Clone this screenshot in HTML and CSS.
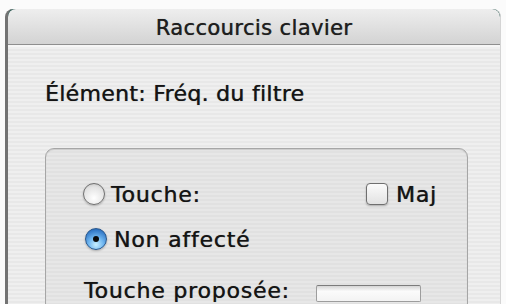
FILE: index.html
```html
<!DOCTYPE html>
<html lang="fr">
<head>
<meta charset="utf-8">
<link rel="stylesheet" href="styles.css">
</head>
<body>
<div class="window">
  <div class="titlebar">Raccourcis clavier</div>
  <div class="content">
    <div class="element">Élément: Fréq. du filtre</div>
    <div class="group">
      <div class="row row1">
        <label class="opt"><span class="radio"></span>Touche:</label>
        <label class="opt maj"><span class="check"></span>Maj</label>
      </div>
      <div class="row row2">
        <label class="opt"><span class="radio on"><span class="dot"></span></span>Non affecté</label>
      </div>
      <div class="row row3">
        <span class="lbl">Touche proposée:</span>
        <span class="field"></span>
      </div>
    </div>
  </div>
</div>
</body>
</html>
```

FILE: styles.css
```css
html, body {
  margin: 0;
  padding: 0;
  background: #fbfbfb;
  overflow: hidden;
}
body {
  width: 506px;
  height: 304px;
  font-family: "DejaVu Sans", "Open Sans", sans-serif;
  color: #141414;
  text-shadow: 0.4px 0 0 rgba(0,0,0,0.55), 0 0 1px rgba(0,0,0,0.35);
}
.window {
  margin: 9px 0 0 5px;
  width: 496px;
  height: 295px;
  border-left: 3px solid #737373;
  border-right: 1px solid #d4d4d4;
  border-radius: 8px 8px 0 0;
  background: #2a5a52;
  overflow: hidden;
  box-sizing: border-box;
}
.titlebar {
  height: 36px;
  background: linear-gradient(#eeeeee, #d3d3d3);
  border-bottom: 1px solid #8e8e8e;
  border-radius: 8px 8px 0 0;
  text-align: center;
  font-size: 21px;
  letter-spacing: 0.4px;
  line-height: 38px;
  color: #1e1e1e;
  box-sizing: border-box;
}
.content {
  height: 260px;
  border-top: 2px solid #f6f6f6;
  background: repeating-linear-gradient(#efefef 0 2px, #e8e8e8 2px 4px);
  padding: 34px 0 0 37px;
  box-sizing: border-box;
}
.element {
  font-size: 22px;
  letter-spacing: 0.3px;
  line-height: 26px;
}
.group {
  margin-top: 41px;
  width: 423px;
  height: 200px;
  border: 1px solid #a6a6a6;
  border-radius: 9px;
  background: repeating-linear-gradient(#e7e7e7 0 2px, #e1e1e1 2px 4px);
  box-shadow: inset 0 1px 1px rgba(0,0,0,0.12);
  padding: 33px 0 0 37px;
  box-sizing: border-box;
}
.row {
  display: flex;
  align-items: center;
  font-size: 22px;
  letter-spacing: 0.8px;
  height: 24px;
}
.row1 {
  justify-content: space-between;
  width: 354px;
}
.row2 {
  margin-top: 21px;
}
.row3 {
  margin-top: 27px;
  padding-left: 1px;
}
.opt {
  display: flex;
  align-items: center;
}
.radio {
  width: 22px;
  height: 22px;
  border-radius: 50%;
  border: 1px solid #6f6f6f;
  background: radial-gradient(circle at 50% 70%, #ffffff, #e2e2e2 65%, #b8b8b8);
  margin-right: 6px;
  display: flex;
  align-items: center;
  justify-content: center;
  box-shadow: 0 1px 2px rgba(0,0,0,0.25);
  box-sizing: border-box;
}
.radio.on {
  border-color: #28578c;
  background: radial-gradient(circle at 50% 78%, #c8efff, #6fb6f0 40%, #2e74c4 80%, #1f5aa0);
  margin-left: 2px;
  margin-right: 7px;
}
.dot {
  width: 6px;
  height: 6px;
  border-radius: 50%;
  background: #0b0b0b;
}
.check {
  width: 22px;
  height: 22px;
  border: 1px solid #6f6f6f;
  border-radius: 4px;
  background: linear-gradient(#fbfbfb, #e2e2e2);
  margin-right: 8px;
  box-shadow: 0 1px 2px rgba(0,0,0,0.25);
  box-sizing: border-box;
}
.lbl {
  margin-right: 26px;
}
.field {
  width: 105px;
  height: 17px;
  border: 1px solid #9d9d9d;
  border-top-color: #7c7c7c;
  border-radius: 2px;
  background: linear-gradient(#d6d6d6, #fbfbfb 35%, #f3f3f3);
  margin-top: 6px;
  box-sizing: border-box;
}
```
